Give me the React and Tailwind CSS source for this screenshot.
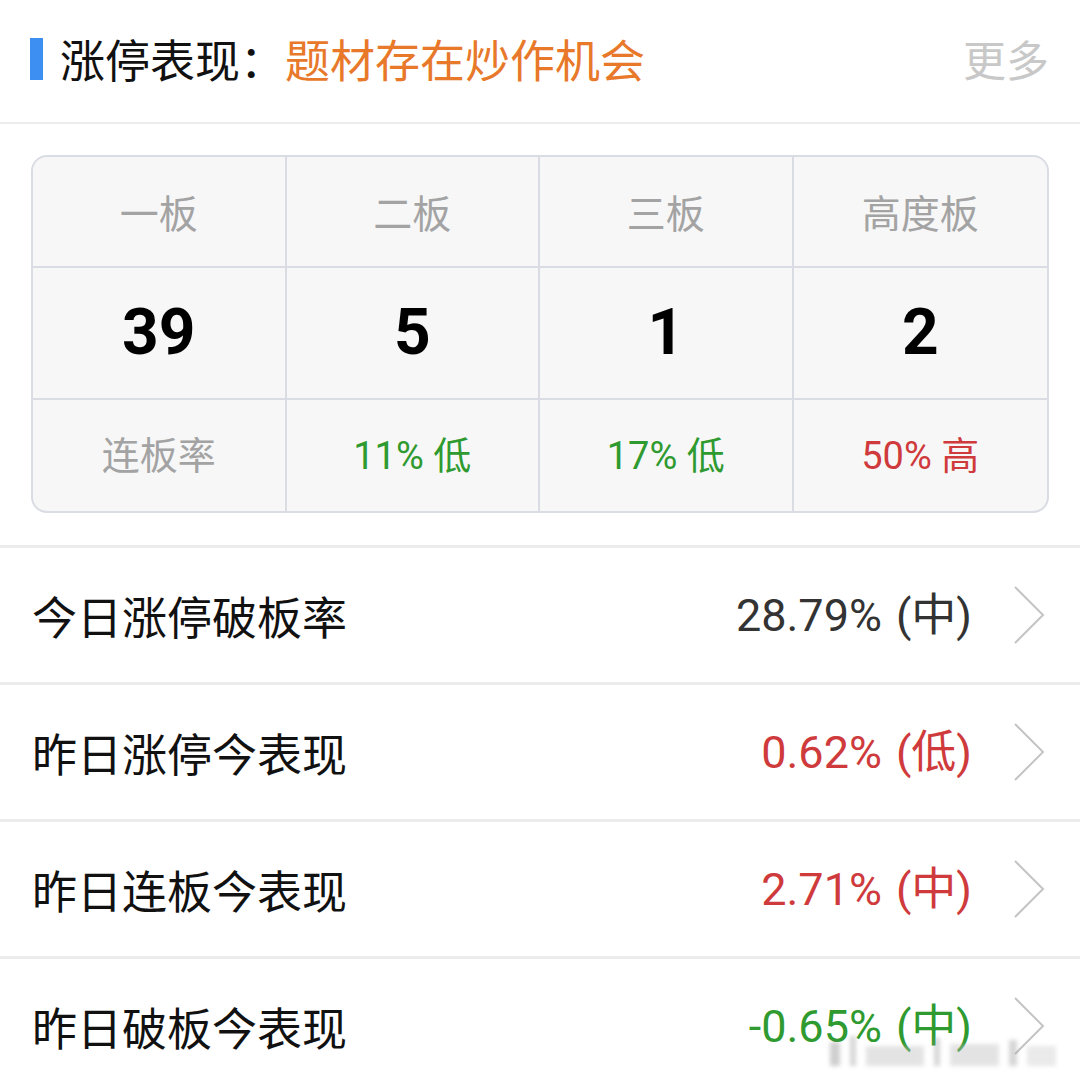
import React from "react";

const font = { fontFamily: '"Noto Sans CJK SC", "Noto Sans", sans-serif' };
const numFont = { fontFamily: 'Roboto, "Noto Sans CJK SC", sans-serif' };

function Chevron() {
  return (
    <svg width="34" height="60" viewBox="0 0 34 60" className="shrink-0">
      <path d="M3 2 L31 30 L3 58" fill="none" stroke="#c4c4c4" strokeWidth="2" />
    </svg>
  );
}

const cols = [
  { h: "一板", n: "39", b: "连板率", bc: "text-[#a3a3a3]" },
  { h: "二板", n: "5", b: "11% 低", bc: "text-[#2f9a2f]" },
  { h: "三板", n: "1", b: "17% 低", bc: "text-[#2f9a2f]" },
  { h: "高度板", n: "2", b: "50% 高", bc: "text-[#cf3a3c]" },
];

const rows = [
  { l: "今日涨停破板率", v: "28.79%", p: "(中)", c: "text-[#333333]" },
  { l: "昨日涨停今表现", v: "0.62%", p: "(低)", c: "text-[#cf3a3c]" },
  { l: "昨日连板今表现", v: "2.71%", p: "(中)", c: "text-[#cf3a3c]" },
  { l: "昨日破板今表现", v: "-0.65%", p: "(中)", c: "text-[#2f9a2f]" },
];

export default function App() {
  return (
    <div className="relative w-[1080px] h-[1074px] bg-white overflow-hidden" style={font}>
      <div className="h-[122px] flex items-center pl-[30px] pr-[31px] pb-[5px]">
        <div className="w-[13px] h-[42px] bg-[#3d8ff2] mr-[17px]" />
        <span className="text-[45px] text-[#111111] leading-none">涨停表现：</span>
        <span className="text-[45px] text-[#e8782a] leading-none">题材存在炒作机会</span>
        <span className="ml-auto text-[43px] text-[#c8c8c8] leading-none">更多</span>
      </div>
      <div className="h-[2px] bg-[#ececec]" />
      <div className="px-[31px] pt-[31px] pb-[32px]">
        <div className="rounded-[16px] border-2 border-[#d9dce2] bg-[#f7f7f8] overflow-hidden grid grid-cols-4">
          {cols.map((c, i) => (
            <div key={i} className={`flex flex-col ${i < 3 ? "border-r-2 border-[#d9dce2]" : ""}`}>
              <div className="h-[111px] flex items-center justify-center text-[39px] text-[#a3a3a3] border-b-2 border-[#d9dce2] leading-none">
                {c.h}
              </div>
              <div
                className="h-[132px] flex items-center justify-center text-[64px] font-bold text-black border-b-2 border-[#d9dce2] leading-none"
                style={numFont}
              >
                {c.n}
              </div>
              <div className={`h-[111px] flex items-center justify-center text-[38px] leading-none ${c.bc}`} style={numFont}>
                {c.b}
              </div>
            </div>
          ))}
        </div>
      </div>
      {rows.map((r, i) => (
        <div key={i} className="border-t-[3px] border-[#ececec] h-[137px] flex items-center pl-[32px] pr-[34px]">
          <span className="text-[45px] text-[#111111] leading-none">{r.l}</span>
          <span className={`ml-auto text-[45px] leading-none mr-[40px] flex gap-[14px] ${r.c}`} style={numFont}>
            <span>{r.v}</span>
            <span>{r.p}</span>
          </span>
          <Chevron />
        </div>
      ))}
      <div className="absolute left-[830px] top-[1036px] w-[226px] h-[30px] flex items-end gap-[10px] opacity-40 blur-[2px] pointer-events-none">
        <div className="w-[10px] h-[24px] bg-[#888]" />
        <div className="w-[6px] h-[30px] bg-[#999]" />
        <div className="w-[60px] h-[20px] bg-[#bbb]" />
        <div className="w-[6px] h-[28px] bg-[#999]" />
        <div className="w-[50px] h-[22px] bg-[#bbb]" />
        <div className="w-[8px] h-[26px] bg-[#999]" />
        <div className="w-[30px] h-[20px] bg-[#ccc]" />
      </div>
    </div>
  );
}
